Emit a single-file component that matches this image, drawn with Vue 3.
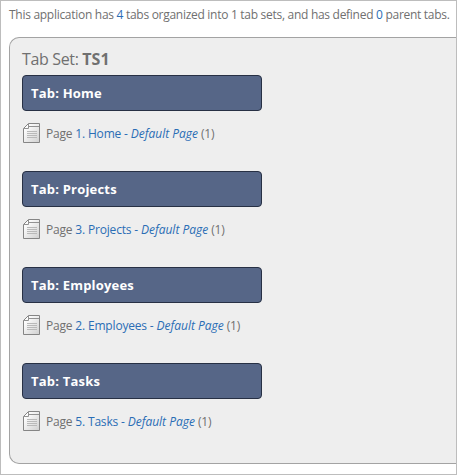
<script setup>
const tabs = [
  { name: 'Home', page: 1 },
  { name: 'Projects', page: 3 },
  { name: 'Employees', page: 2 },
  { name: 'Tasks', page: 5 },
]
</script>

<template>
  <main class="frame">
    <p class="summary">This application has <a>4</a> tabs organized into 1 tab sets, and has defined <a>0</a> parent tabs.</p>
    <section class="tab-set">
      <h1 class="set-title">Tab Set: <b>TS1</b></h1>
      <article v-for="tab in tabs" :key="tab.name" class="tab">
        <h2 class="tab-title">Tab: {{ tab.name }}</h2>
        <div class="page-row">
          <svg class="page-icon" width="17" height="20" viewBox="0 0 17 20">
            <defs>
              <linearGradient id="paper" x1="0" y1="0" x2="1" y2="1">
                <stop offset="0.2" stop-color="#fdfdfd" />
                <stop offset="1" stop-color="#cfcfcf" />
              </linearGradient>
            </defs>
            <path d="M5.5.5H16.5V19.5H.5V5.5Z" fill="url(#paper)" stroke="#858585" />
            <path d="M5.5.5V5.5H.5M5.5 3.5H16" fill="none" stroke="#929292" />
            <path d="M4 8.5H14M4 10.5H14M4 12.5H14M4 14.5H14" stroke="#b9b9b9" />
          </svg>
          <span class="page-text">Page <a>{{ tab.page }}. {{ tab.name }} - <i>Default Page</i></a> (1)</span>
        </div>
      </article>
    </section>
  </main>
</template>

<style>
body {
  margin: 0;
}
</style>

<style scoped>
.frame {
  box-sizing: border-box;
  width: 457px;
  height: 475px;
  overflow: hidden;
  padding: 5px 0 0 8px;
  border: 1px solid #bdbdbd;
  background: #fff;
  color: #707070;
  font-family: "Open Sans", "Noto Sans", sans-serif;
  font-size: 12px;
}
.summary {
  margin: 0 0 13px;
  letter-spacing: -0.285px;
  line-height: 18px;
  white-space: nowrap;
}
a {
  color: #2a6db5;
}
.tab-set {
  box-sizing: border-box;
  height: 427px;
  padding: 10px 0 0 12px;
  border: 1px solid #a3a3a3;
  border-right: 0;
  border-radius: 10px 0 0 10px;
  background: #eee;
}
.set-title {
  margin: 0 0 5px;
  font-size: 16px;
  font-weight: 400;
  letter-spacing: -0.35px;
  line-height: 22px;
}
.set-title b {
  letter-spacing: 0;
}
.tab {
  height: 96px;
}
.tab-title {
  box-sizing: border-box;
  width: 240px;
  height: 36px;
  margin: 0 0 12px;
  padding-left: 8px;
  border: 1px solid #273044;
  border-radius: 4px;
  background: #566687;
  color: #fff;
  font-size: 13px;
  font-weight: 700;
  letter-spacing: 0.2px;
  line-height: 34px;
}
.page-row {
  display: flex;
  align-items: center;
  height: 20px;
  gap: 6px;
  padding-left: 1px;
}
.page-icon {
  display: block;
}
.page-text {
  padding-top: 2px;
  letter-spacing: -0.18px;
  line-height: 20px;
  white-space: nowrap;
}
.page-text i {
  letter-spacing: 0;
}
</style>
